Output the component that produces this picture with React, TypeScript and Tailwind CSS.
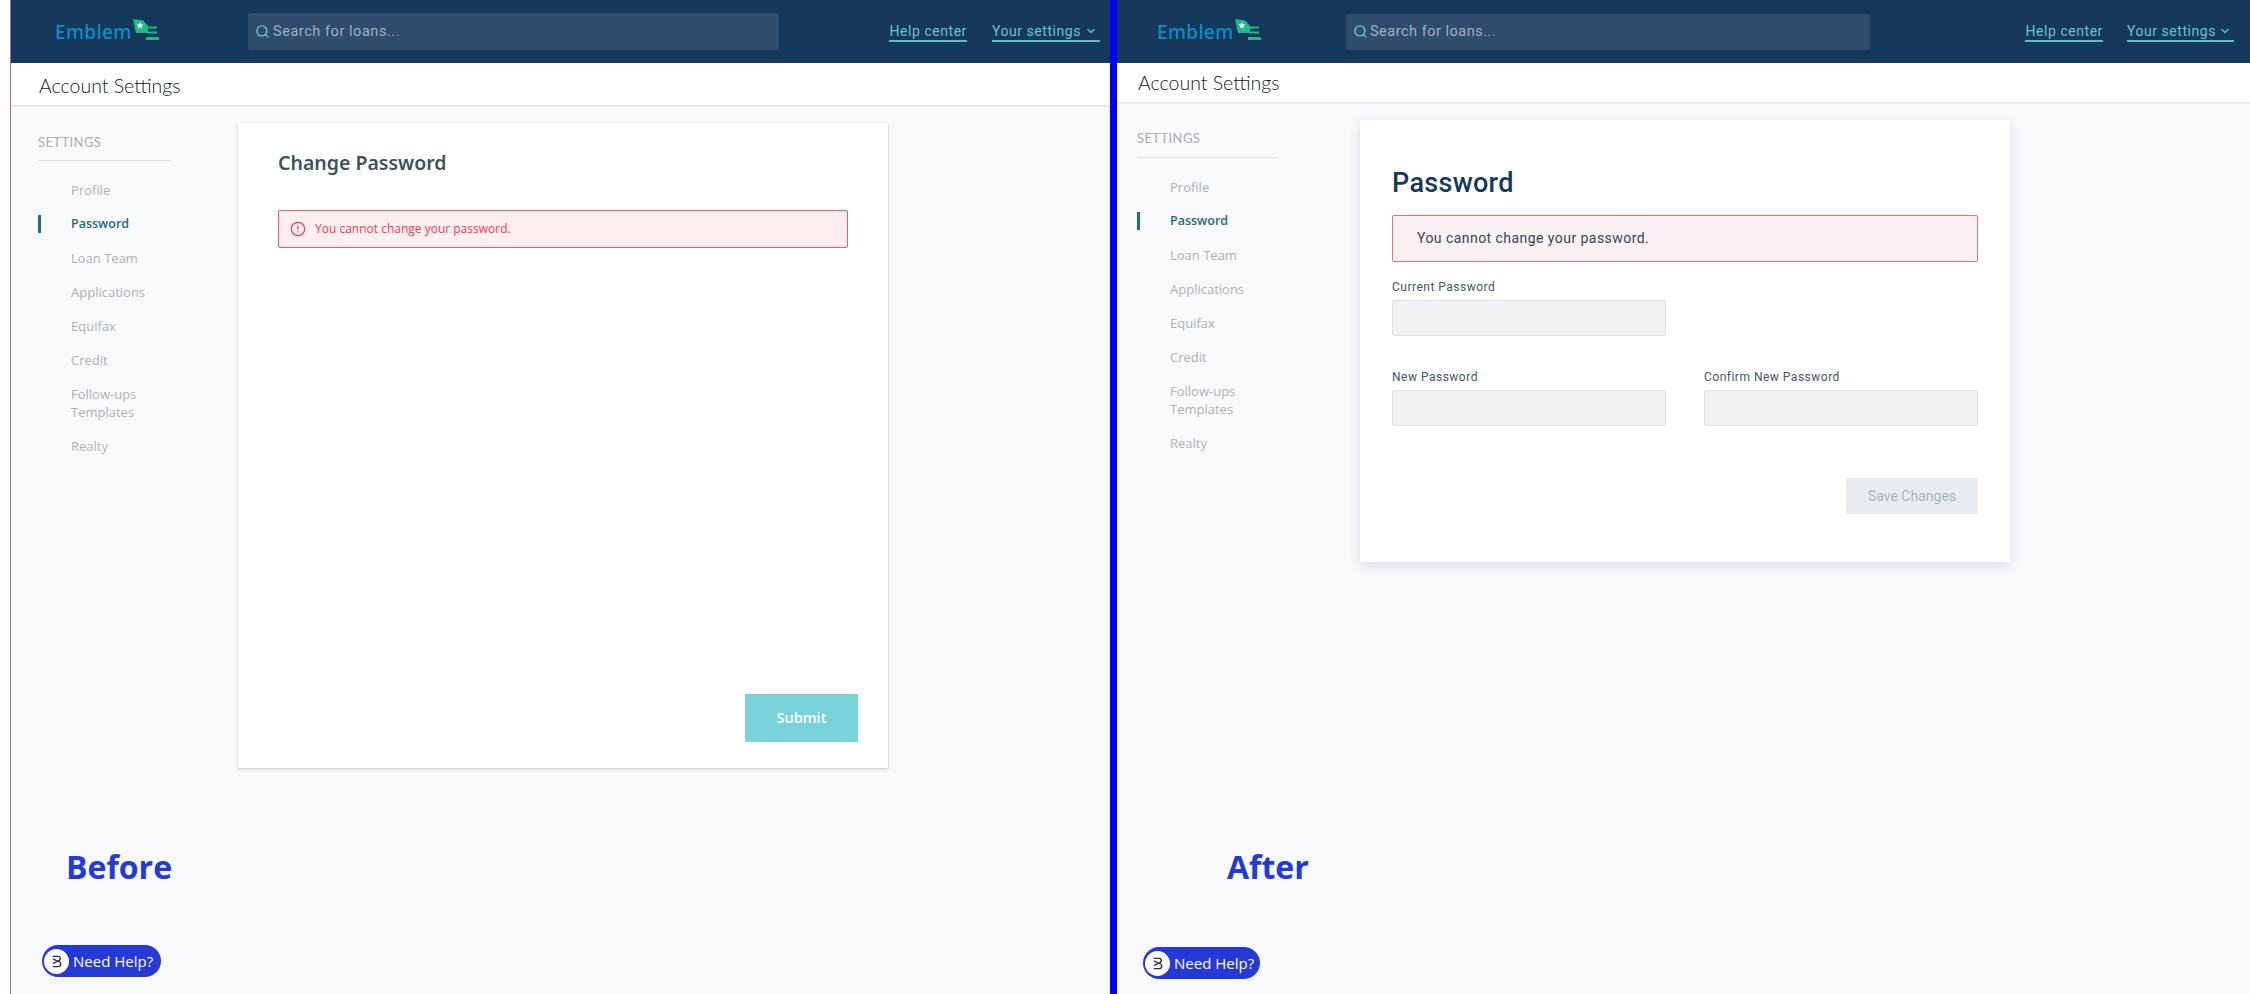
import { ChevronDown, CircleAlert, Search } from "lucide-react";

const menu = ["Profile", "Password", "Loan Team", "Applications", "Equifax", "Credit", "Follow-ups Templates", "Realty"];

function Logo() {
  return (
    <div className="flex items-center">
      <span className="font-['Noto_Sans',sans-serif] font-medium text-[19px] leading-[24px] tracking-[0.35px] text-[#0b8ecb]">Emblem</span>
      <svg width="28" height="22" viewBox="0 0 28 22" className="-mt-[3px]">
        <path d="M1 0 L11 1.5 L16 7 L16 14 L4 14 Z" fill="#1fb98a" />
        <path d="M15 7.5 H25 V9.5 H15 Z M15 12.5 H25 V14.5 H15 Z M14 18 H27 V21 H14 Z" fill="#1fb98a" />
        <path d="M8 3 L9 5.4 L11.5 5.6 L9.5 7.2 L10.2 9.6 L8 8.3 L5.8 9.6 L6.5 7.2 L4.5 5.6 L7 5.4 Z" fill="#ffffff" />
      </svg>
    </div>
  );
}

function NavLink({ children }: { children: React.ReactNode }) {
  return (
    <a className="flex items-center h-[21px] border-b-2 border-[#5fbcc8] font-['Roboto',sans-serif] text-[14px] leading-[20px] tracking-[0.55px] text-[#6cc3cf]">
      {children}
    </a>
  );
}

function HelpButton({ className }: { className: string }) {
  return (
    <div className={`absolute flex items-center h-[32px] rounded-full bg-[#2439d6] pl-[1px] ${className}`}>
      <div className="flex items-center justify-center w-[25px] h-[25px] ml-[1px] rounded-full bg-white">
        <svg width="11" height="13" viewBox="0 0 13 15" fill="none" stroke="#2b2f45" strokeWidth="1.6">
          <path d="M2 1.5 H8.5 Q11 1.5 11 4 Q11 6.8 7.5 7 L2.5 4.5 M2 13.5 H8.5 Q11.5 13.5 11.5 10.5 Q11.5 7.5 7.5 7 L2.5 10" />
        </svg>
      </div>
      <span className="ml-[4px] font-['Open_Sans',sans-serif] text-[15px] leading-[20px] text-white">Need Help?</span>
    </div>
  );
}

function Sidebar({ className, titleClass }: { className: string; titleClass: string }) {
  return (
    <aside className={`shrink-0 ${className}`}>
      <div className={`border-b border-[#dfe1e5] font-['Lato',sans-serif] text-[13px] leading-[20px] tracking-[0.4px] text-[#a8acb1] ${titleClass}`}>SETTINGS</div>
      <ul className="mt-5 w-[133px] flex flex-col gap-4 font-['Open_Sans',sans-serif] text-[13px] leading-[18px]">
        {menu.map((item) => (
          <li
            key={item}
            className={
              item === "Password"
                ? "border-l-[3px] border-[#286a78] pl-[30px] font-semibold text-[12.5px] text-[#286a78]"
                : "pl-[33px] text-[#adb1b6]"
            }
          >
            {item}
          </li>
        ))}
      </ul>
    </aside>
  );
}

function Field({ label }: { label: string }) {
  return (
    <div>
      <label className="block font-['Roboto',sans-serif] text-[12px] leading-[16px] tracking-[0.5px] text-[#3f5671]">{label}</label>
      <div className="mt-[5px] h-[36px] rounded-[2px] border border-[#dfe2e5] bg-[#f1f2f4]" />
    </div>
  );
}

function Before() {
  return (
    <section className="relative w-[1099px] h-full shrink-0 bg-[#f8f9fb]">
      <header className="flex items-center h-[63px] bg-[#15395b] pl-[44px] pr-[10px]">
        <div className="w-[193px] shrink-0"><Logo /></div>
        <div className="flex items-center w-[531px] h-[37px] rounded-[3px] bg-[#2e4c6b] pl-[7px]">
          <Search size={15} strokeWidth={2.2} className="text-[#6fc4cf]" />
          <span className="ml-[3px] font-['Roboto',sans-serif] text-[14.5px] tracking-[0.55px] text-[#9fb3c2]">Search for loans...</span>
        </div>
        <div className="ml-auto flex gap-[25px]">
          <NavLink>Help center</NavLink>
          <NavLink>Your settings<ChevronDown size={12} strokeWidth={2.5} className="ml-[4px] mr-[3px]" /></NavLink>
        </div>
      </header>
      <div className="flex items-center h-[44px] pl-[28px] pt-[4px] border-b-2 border-[#e6e8ea] bg-white font-['Lato',sans-serif] font-light text-[19.5px] text-[#0f1a22]">Account Settings</div>
      <div className="flex">
        <Sidebar className="w-[227px] pl-[27px] pt-[25px]" titleClass="w-[133px] pb-2" />
        <div className="mt-4 flex flex-col w-[650px] h-[645px] bg-white pl-10 pr-[30px] pt-[26px] pb-[26px] shadow-[0_1px_3px_rgba(40,50,60,0.25)]">
          <h2 className="font-['Noto_Sans',sans-serif] font-semibold text-[19.5px] leading-[28px] text-[#3d525e]">Change Password</h2>
          <div className="mt-[33px] mr-[10px] flex items-center h-[38px] rounded-[2px] border border-[#f0576a] bg-[#feeef0] pl-[11px] text-[#ee3d55]">
            <CircleAlert size={16} strokeWidth={1.8} />
            <span className="ml-[9px] font-['Open_Sans',sans-serif] text-[12px] font-medium">You cannot change your password.</span>
          </div>
          <button className="mt-auto self-end w-[113px] h-[48px] bg-[#78d2da] font-['Open_Sans',sans-serif] font-semibold text-[14.5px] text-white">Submit</button>
        </div>
      </div>
      <div className="absolute left-[55px] top-[845px] font-['Open_Sans',sans-serif] font-bold text-[32px] leading-[44px] text-[#2439d6]">Before</div>
      <HelpButton className="left-[31px] top-[945px] w-[119px]" />
    </section>
  );
}

function After() {
  return (
    <section className="relative flex-1 h-full bg-[#f8f9fb]">
      <header className="flex items-center h-[63px] bg-[#15395b] pl-[40px] pr-[16px]">
        <div className="w-[189px] shrink-0"><Logo /></div>
        <div className="flex items-center w-[524px] h-[36px] rounded-[3px] bg-[#2e4c6b] pl-[7px]">
          <Search size={15} strokeWidth={2.2} className="text-[#6fc4cf]" />
          <span className="ml-[2px] font-['Roboto',sans-serif] text-[14.5px] tracking-[0.5px] text-[#9fb3c2]">Search for loans...</span>
        </div>
        <div className="ml-auto flex gap-[24px]">
          <NavLink>Help center</NavLink>
          <NavLink>Your settings<ChevronDown size={12} strokeWidth={2.5} className="ml-[3px] mr-[3px]" /></NavLink>
        </div>
      </header>
      <div className="flex items-center h-[41px] pl-[21px] border-b-2 border-[#e6e8ea] bg-white font-['Lato',sans-serif] font-light text-[19.5px] text-[#0f1a22]">Account Settings</div>
      <div className="flex">
        <Sidebar className="w-[243px] pl-[20px] pt-[24px]" titleClass="w-[141px] pb-[9px]" />
        <div className="mt-4 w-[650px] bg-white px-8 pt-[45px] pb-[48px] shadow-[0_4px_12px_rgba(30,50,80,0.14)]">
          <h2 className="font-['Roboto',sans-serif] font-medium text-[27px] leading-[36px] tracking-[0.3px] text-[#15395b]">Password</h2>
          <div className="mt-[14px] flex items-center h-[47px] rounded-[2px] border border-[#e0707f] bg-[#fbf1f3] pl-[24px] font-['Roboto',sans-serif] text-[14px] tracking-[0.45px] text-[#2e4560]">You cannot change your password.</div>
          <div className="mt-[17px] w-[274px]"><Field label="Current Password" /></div>
          <div className="mt-[33px] grid grid-cols-2 gap-x-[38px]">
            <Field label="New Password" />
            <Field label="Confirm New Password" />
          </div>
          <div className="mt-[52px] flex justify-end">
            <button className="w-[132px] h-[36px] rounded-[2px] bg-[#e9ecef] font-['Roboto',sans-serif] text-[14px] text-[#aab3bd]">Save Changes</button>
          </div>
        </div>
      </div>
      <div className="absolute left-[110px] top-[845px] font-['Open_Sans',sans-serif] font-bold text-[32px] leading-[44px] text-[#2439d6]">After</div>
      <HelpButton className="left-[26px] top-[947px] w-[117px]" />
    </section>
  );
}

function App() {
  return (
    <div className="flex w-[2250px] h-[994px] overflow-hidden bg-white">
      <div className="w-[10px] shrink-0 border-r border-[#9b6bbf] box-content" />
      <Before />
      <div className="w-[7px] shrink-0 bg-[#0000ff]" />
      <After />
    </div>
  );
}

export default App;
